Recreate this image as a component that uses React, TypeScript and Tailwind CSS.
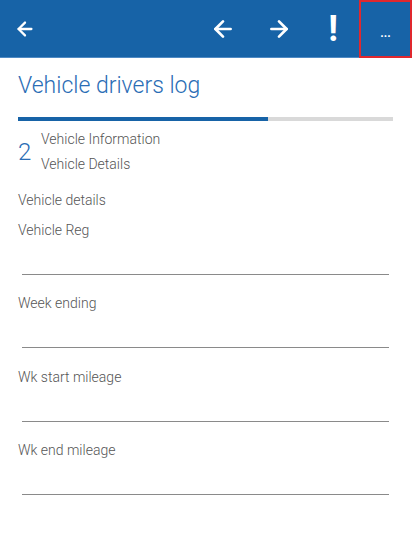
import { ArrowLeft, ArrowRight } from 'lucide-react';

const FIELDS = ['Vehicle Reg', 'Week ending', 'Wk start mileage', 'Wk end mileage'];

export default function App() {
  return (
    <div className="h-[555px] w-[412px] bg-white font-['Roboto',sans-serif] font-light">
      <header className="flex h-[58px] items-center border-b border-[#4f8ac4] bg-[#1763a7] text-white">
        <button className="flex h-full w-[50px] items-center justify-center">
          <ArrowLeft size={22} strokeWidth={2.5} />
        </button>
        <div className="flex-1" />
        <button className="flex h-full w-[56px] items-center justify-center">
          <ArrowLeft size={26} strokeWidth={2.5} />
        </button>
        <button className="flex h-full w-[56px] items-center justify-center">
          <ArrowRight size={26} strokeWidth={2.5} />
        </button>
        <button className="flex h-full w-[52px] items-center justify-center text-[36px] font-bold leading-none">
          !
        </button>
        <button className="flex h-[58px] w-[53px] items-center justify-center border-2 border-[#e0282e] pt-2 text-[12px] font-bold">
          ...
        </button>
      </header>

      <div className="px-[18px]">
        <h1 className="mt-[14px] text-[23px] leading-[28px] text-[#2a6db5]">Vehicle drivers log</h1>

        <div className="mt-[17px] flex h-[4px] w-[375px] bg-[#d9d9d9]">
          <div className="h-full w-[250px] bg-[#1763a7]" />
        </div>

        <div className="mt-[6px] flex items-center">
          <span className="w-[23px] text-[24px] leading-none text-[#2a6db5]">2</span>
          <div className="text-[14px] leading-[25px] text-[#555]">
            <div>Vehicle Information</div>
            <div>Vehicle Details</div>
          </div>
        </div>

        <div className="mt-[13px] text-[14px] leading-[20px] text-[#555]">Vehicle details</div>

        <div className="mt-[10px]">
          {FIELDS.map((label) => (
            <div key={label} className="h-[73.4px] text-[14px] text-[#555]">
              <div className="leading-[20px]">{label}</div>
              <div className="ml-[4px] mt-[34px] w-[367px] border-b border-[#8a8a8a]" />
            </div>
          ))}
        </div>
      </div>
    </div>
  );
}
